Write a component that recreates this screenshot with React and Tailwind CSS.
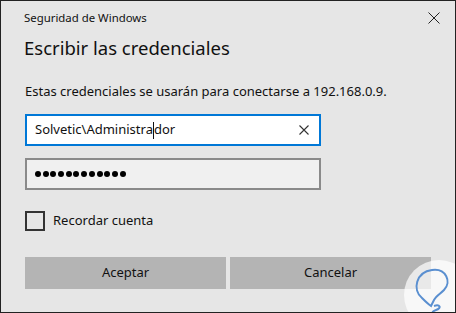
import React from "react";

export default function App() {
  const font = { fontFamily: '"Segoe UI", "Noto Sans", "Open Sans", sans-serif' };
  return (
    <div className="w-[456px] h-[313px] bg-white" style={font}>
      <div className="relative w-[456px] h-[313px] bg-[#e6e6e6] border border-[#222] overflow-hidden flex flex-col">
        <div className="flex items-center justify-between pl-[23px] pr-[14px] h-[34px]">
          <span className="text-[11.4px] text-[#111]">Seguridad de Windows</span>
          <svg width="12" height="12" viewBox="0 0 12 12" className="mr-[1px]">
            <path d="M0.5 0.5 L11.5 11.5 M11.5 0.5 L0.5 11.5" stroke="#222" strokeWidth="1" />
          </svg>
        </div>
        <div className="pl-[23px] mt-[-1px] text-[18.5px] font-normal leading-[28px] text-[#111]">Escribir las credenciales</div>
        <div className="pl-[24px] mt-[20px] text-[13px] leading-[18px] text-[#111]">
          Estas credenciales se usarán para conectarse a 192.168.0.9.
        </div>
        <div className="ml-[24px] mt-[14px] w-[296px] h-[32px] bg-white border-2 border-[#0078d7] flex items-center pl-[8px] pr-[10px]">
          <span className="text-[13px] text-[#111] relative">
            Solvetic\Administra
            <span className="inline-block w-[1px] h-[17px] bg-[#111] align-middle"></span>
            dor
          </span>
          <div className="flex-1" />
          <svg width="10" height="10" viewBox="0 0 10 10">
            <path d="M0.5 0.5 L9.5 9.5 M9.5 0.5 L0.5 9.5" stroke="#333" strokeWidth="1.1" />
          </svg>
        </div>
        <div className="ml-[24px] mt-[12px] w-[296px] h-[32px] bg-[#f0f0f0] border-2 border-[#8a8a8a] flex items-center pl-[8px]">
          <div className="flex gap-[1.7px]">
            {Array.from({ length: 12 }).map((_, i) => (
              <span key={i} className="block w-[6px] h-[6px] rounded-full bg-black"></span>
            ))}
          </div>
        </div>
        <div className="ml-[24px] mt-[21px] flex items-center gap-[8px]">
          <span className="block w-[20px] h-[20px] border-2 border-[#333]"></span>
          <span className="text-[13px] text-[#111]">Recordar cuenta</span>
        </div>
        <div className="ml-[24px] mt-[26px] flex gap-[4px]">
          <button className="w-[201px] h-[32px] bg-[#b4b4b4] text-[13px] text-[#111]">Aceptar</button>
          <button className="w-[201px] h-[32px] bg-[#b4b4b4] text-[13px] text-[#111]">Cancelar</button>
        </div>
        <div className="absolute left-[403px] top-[259px] w-[70px] h-[70px] rounded-full bg-white/70">
          <svg width="70" height="70" viewBox="0 0 70 70">
            <path
              d="M18 38 C8 30 12 12 28 10 C42 8 48 22 40 30 C36 34 32 36 30 40 L27 46 C24 44 21 41 18 38 Z"
              fill="none"
              stroke="#5a8fd0"
              strokeWidth="2"
            />
            <path d="M30 46 C36 44 38 48 32 50 C26 52 28 56 36 54" fill="none" stroke="#5a8fd0" strokeWidth="2" />
          </svg>
        </div>
      </div>
    </div>
  );
}
